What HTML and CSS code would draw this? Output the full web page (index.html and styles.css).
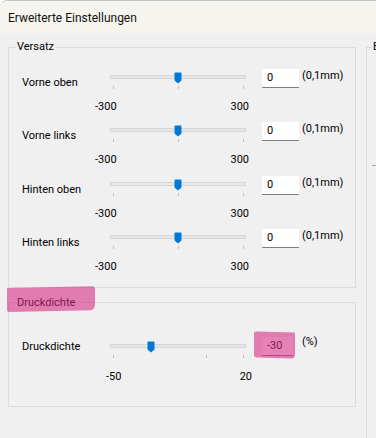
FILE: index.html
```html
<!DOCTYPE html>
<html lang="de">
<head>
<meta charset="utf-8">
<title>Erweiterte Einstellungen</title>
<link rel="stylesheet" href="styles.css">
</head>
<body>
<div class="window">
  <div class="titlebar">Erweiterte Einstellungen</div>
  <div class="content">
    <div class="col-main">
      <fieldset class="group group-offset">
        <legend class="legend">Versatz</legend>
        <div class="group-body body-offset">
          <div class="row">
            <span class="row-label">Vorne oben</span>
            <div class="slider">
              <div class="track"><div class="rail"><span class="thumb" style="left:50%"><svg width="8" height="12" viewBox="0 0 8 12"><path d="M1.5 0.5 H6.5 Q7.5 0.5 7.5 1.5 V8.5 L4 11.5 L0.5 8.5 V1.5 Q0.5 0.5 1.5 0.5 Z" fill="#0078d7"/></svg></span></div></div>
              <div class="ticks"><i style="left:0%"></i><i style="left:50%"></i><i style="left:100%"></i></div>
              <div class="nums nums-offset"><span>-300</span><span>300</span></div>
            </div>
            <div class="field"><span>0</span></div>
            <span class="unit">(0,1mm)</span>
          </div>
          <div class="row">
            <span class="row-label">Vorne links</span>
            <div class="slider">
              <div class="track"><div class="rail"><span class="thumb" style="left:50%"><svg width="8" height="12" viewBox="0 0 8 12"><path d="M1.5 0.5 H6.5 Q7.5 0.5 7.5 1.5 V8.5 L4 11.5 L0.5 8.5 V1.5 Q0.5 0.5 1.5 0.5 Z" fill="#0078d7"/></svg></span></div></div>
              <div class="ticks"><i style="left:0%"></i><i style="left:50%"></i><i style="left:100%"></i></div>
              <div class="nums nums-offset"><span>-300</span><span>300</span></div>
            </div>
            <div class="field"><span>0</span></div>
            <span class="unit">(0,1mm)</span>
          </div>
          <div class="row">
            <span class="row-label">Hinten oben</span>
            <div class="slider">
              <div class="track"><div class="rail"><span class="thumb" style="left:50%"><svg width="8" height="12" viewBox="0 0 8 12"><path d="M1.5 0.5 H6.5 Q7.5 0.5 7.5 1.5 V8.5 L4 11.5 L0.5 8.5 V1.5 Q0.5 0.5 1.5 0.5 Z" fill="#0078d7"/></svg></span></div></div>
              <div class="ticks"><i style="left:0%"></i><i style="left:50%"></i><i style="left:100%"></i></div>
              <div class="nums nums-offset"><span>-300</span><span>300</span></div>
            </div>
            <div class="field"><span>0</span></div>
            <span class="unit">(0,1mm)</span>
          </div>
          <div class="row">
            <span class="row-label">Hinten links</span>
            <div class="slider">
              <div class="track"><div class="rail"><span class="thumb" style="left:50%"><svg width="8" height="12" viewBox="0 0 8 12"><path d="M1.5 0.5 H6.5 Q7.5 0.5 7.5 1.5 V8.5 L4 11.5 L0.5 8.5 V1.5 Q0.5 0.5 1.5 0.5 Z" fill="#0078d7"/></svg></span></div></div>
              <div class="ticks"><i style="left:0%"></i><i style="left:50%"></i><i style="left:100%"></i></div>
              <div class="nums nums-offset"><span>-300</span><span>300</span></div>
            </div>
            <div class="field"><span>0</span></div>
            <span class="unit">(0,1mm)</span>
          </div>
        </div>
      </fieldset>

      <fieldset class="group group-density">
        <legend class="legend legend-marked">Druckdichte</legend>
        <div class="group-body body-density">
          <div class="row row-density">
            <span class="row-label">Druckdichte</span>
            <div class="slider">
              <div class="track"><div class="rail"><span class="thumb" style="left:28.57%"><svg width="8" height="12" viewBox="0 0 8 12"><path d="M1.5 0.5 H6.5 Q7.5 0.5 7.5 1.5 V8.5 L4 11.5 L0.5 8.5 V1.5 Q0.5 0.5 1.5 0.5 Z" fill="#0078d7"/></svg></span></div></div>
              <div class="ticks"><i style="left:0%"></i><i style="left:71.43%"></i><i style="left:100%"></i></div>
              <div class="nums nums-density"><span>-50</span><span>20</span></div>
            </div>
            <div class="field field-marked"><span>-30</span></div>
            <span class="unit">(%)</span>
          </div>
        </div>
      </fieldset>
    </div>

    <div class="col-side">
      <fieldset class="group group-side">
        <legend class="legend legend-side">E</legend>
        <div class="side-sep"></div>
      </fieldset>
    </div>
  </div>
</div>
</body>
</html>
```

FILE: styles.css
```css
* {
  box-sizing: border-box;
}

html,
body {
  margin: 0;
  padding: 0;
  background: #ffffff;
}

body {
  width: 376px;
  height: 438px;
  overflow: hidden;
  font-family: Roboto, "Noto Sans", sans-serif;
  font-size: 11px;
  color: #000000;
}

.window {
  width: 376px;
  height: 438px;
  background: #f0f0f0;
  border-top: 1px solid #c4c4c4;
  border-top-left-radius: 7px;
  overflow: hidden;
}

.titlebar {
  height: 32px;
  background: #f5f4ee;
  padding: 1px 0 0 8px;
  font-size: 12px;
  line-height: 32px;
  color: #111111;
}

.content {
  display: flex;
  gap: 10px;
  padding: 7px 0 0 8px;
}

.col-main {
  width: 348px;
  flex: none;
  display: flex;
  flex-direction: column;
}

.col-side {
  flex: 1;
  min-width: 40px;
}

.group {
  margin: 0;
  padding: 0;
  min-width: 0;
  border: 1px solid #dcdcdc;
}

.legend {
  margin-left: 7px;
  padding: 0 1px;
  line-height: 14px;
  font-size: 11px;
}

.legend-marked {
  position: relative;
}

.legend-marked::after {
  content: "";
  position: absolute;
  left: -9px;
  top: -9px;
  width: 88px;
  height: 24px;
  background: rgba(214, 40, 130, 0.58);
  border-radius: 1px 3px 5px 2px;
  transform: skewY(-1.2deg);
}

.group-body {
  padding-left: 13px;
}

.body-offset {
  padding-top: 12.7px;
  padding-bottom: 6.3px;
}

.group-density {
  margin-top: 8px;
}

.body-density {
  padding-top: 24px;
  padding-bottom: 22px;
}

.row {
  display: grid;
  grid-template-columns: 88px 136px max-content max-content;
  justify-content: start;
  align-items: start;
  height: 53.5px;
}

.row-label {
  padding-top: 9px;
  line-height: 14px;
  white-space: nowrap;
}

.slider {
  padding-top: 8px;
}

.track {
  position: relative;
  height: 4px;
  background: #e7e7e7;
  border: 1px solid #d6d6d6;
}

.rail {
  position: absolute;
  top: 0;
  bottom: 0;
  left: 3px;
  right: 3px;
}

.thumb {
  position: absolute;
  top: -4px;
  width: 8px;
  height: 12px;
  transform: translateX(-50%);
  display: block;
}

.thumb svg {
  display: block;
}

.ticks {
  position: relative;
  height: 3px;
  margin: 7px 3px 0 3px;
}

.ticks i {
  position: absolute;
  top: 0;
  width: 1px;
  height: 3px;
  background: #c2c2c2;
}

.nums {
  display: flex;
  justify-content: space-between;
  margin-top: 11px;
  line-height: 14px;
}

.nums-offset {
  margin-left: -15px;
  margin-right: -3px;
}

.nums-density {
  margin-left: -4px;
  margin-right: -6px;
  margin-top: 11.7px;
}

.field {
  position: relative;
  width: 37px;
  height: 19px;
  margin-top: 2.3px;
  margin-left: 16px;
  background: #ffffff;
  border-bottom: 1px solid #7f7f7f;
  padding-left: 5px;
  line-height: 18px;
}

.unit {
  margin-top: 2.3px;
  margin-left: 3px;
  line-height: 14px;
  white-space: nowrap;
}

.row-density {
  height: 50px;
}

.row-density .row-label {
  padding-top: 6.3px;
}

.row-density .slider {
  padding-top: 10px;
}

.row-density .field {
  width: 31px;
  margin-top: 3px;
}

.row-density .unit {
  margin-top: 0.7px;
  margin-left: 9px;
}

.field-marked::after {
  content: "";
  position: absolute;
  left: -8px;
  top: -5px;
  width: 41px;
  height: 26px;
  background: rgba(214, 40, 130, 0.58);
  border-radius: 2px 1px 4px 3px;
  transform: skewY(1.5deg);
}

.group-side {
  height: 420px;
  border-right: none;
}

.legend-side {
  margin-left: 5px;
  padding: 0 1px;
}

.side-sep {
  height: 1px;
  width: 20px;
  margin-top: 111px;
  margin-left: 5px;
  background: #a8a8a8;
}
```
